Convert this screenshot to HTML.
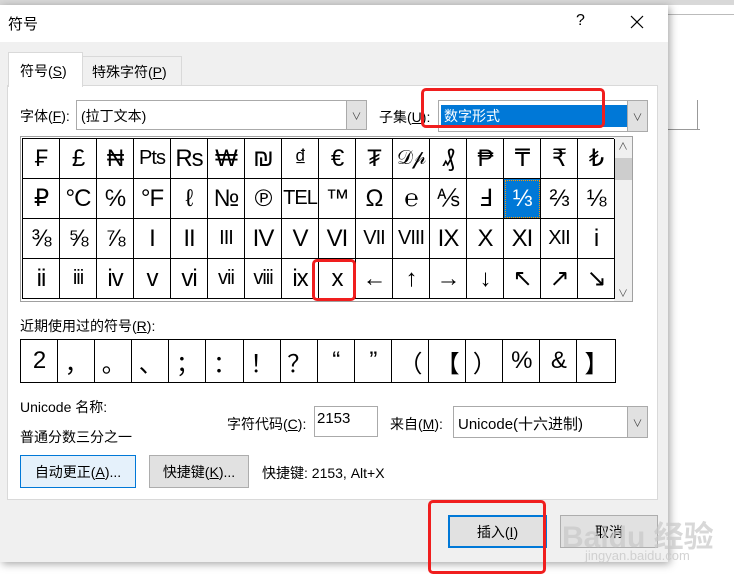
<!DOCTYPE html>
<html><head><meta charset="utf-8">
<style>
*{box-sizing:border-box;margin:0;padding:0}
body{width:734px;height:584px;background:#fff;position:relative;overflow:hidden;font-family:"Liberation Sans","Noto Sans CJK SC",sans-serif;font-size:14px;color:#000}
.abs{position:absolute}
.dlg{left:0;top:5px;width:668px;height:557px;background:#f0f0f0;box-shadow:2px 2px 8px rgba(0,0,0,.35)}
.cell{position:absolute;display:flex;align-items:center;justify-content:center;border-right:1px solid #000;border-bottom:1px solid #000;font-size:24px;background:#fff;font-family:"Liberation Sans","DejaVu Sans",sans-serif;font-weight:normal;white-space:nowrap;overflow:hidden;letter-spacing:-1px}
.combo{background:#fff;border:1px solid #aaa}
.arrow{position:absolute;right:0;top:0;bottom:0;width:20px;background:#e1e1e1;border-left:1px solid #aaa;display:flex;align-items:center;justify-content:center;font-size:10px;color:#444}
.btn{position:absolute;background:#e1e1e1;border:1px solid #adadad;display:flex;align-items:center;justify-content:center;font-size:14px}
.red{position:absolute;border:3px solid #f01e1e;border-radius:5px}
u{text-decoration:underline}
</style></head><body>
<div class="abs" style="left:0;top:0;width:734px;height:5px;background:#d8d8d8"></div>
<div class="abs" style="left:668px;top:14px;width:66px;height:1px;background:#bbb"></div>
<div class="abs" style="left:697px;top:100px;width:1px;height:30px;background:#999"></div>
<div class="abs" style="left:668px;top:129px;width:32px;height:1px;background:#999"></div>
<div class="abs dlg"></div>
<div class="abs" style="left:0;top:5px;width:668px;height:37px;background:#fff"></div>
<div class="abs" style="left:8px;top:13px;font-size:15px">符号</div>
<div class="abs" style="left:576px;top:12px;font-size:16px">?</div>
<svg class="abs" style="left:630px;top:15px" width="14" height="14"><path d="M1 1L13 13M13 1L1 13" stroke="#000" stroke-width="1.2"/></svg>
<div class="abs" style="left:7px;top:85px;width:651px;height:415px;background:#fff;border:1px solid #d9d9d9"></div>
<div class="abs" style="left:82px;top:56px;width:100px;height:30px;background:#f0f0f0;border:1px solid #d9d9d9"></div>
<div class="abs" style="left:92px;top:62px;font-size:14px">特殊字符(<u>P</u>)</div>
<div class="abs" style="left:8px;top:52px;width:75px;height:35px;background:#fff;border:1px solid #d9d9d9;border-bottom:none"></div>
<div class="abs" style="left:20px;top:61px;font-size:14px">符号(<u>S</u>)</div>
<div class="abs" style="left:20px;top:106px">字体(<u>F</u>):</div>
<div class="abs combo" style="left:76px;top:100px;width:291px;height:30px"><span style="position:absolute;left:4px;top:5px">(拉丁文本)</span><div class="arrow">∨</div></div>
<div class="abs" style="left:379px;top:107px">子集(<u>U</u>):</div>
<div class="abs combo" style="left:438px;top:100px;width:210px;height:32px"><div style="position:absolute;left:2px;top:4px;width:186px;height:22px;background:#0078d7;color:#fff;padding-left:3px;line-height:22px">数字形式</div><div class="arrow">∨</div></div>
<div class="red" style="left:421px;top:88px;width:184px;height:40px"></div>
<div class="abs" style="left:20px;top:136px;width:613px;height:166px;border:1px solid #a0a0a0;background:#fff"></div>
<div class="abs" style="left:22px;top:138px;width:1px;height:161px;background:#000"></div>
<div class="abs" style="left:22px;top:138px;width:592px;height:1px;background:#000"></div>
<div class="abs" style="left:614px;top:137px;width:18px;height:164px;background:#f0f0f0"></div>
<div class="abs" style="left:615px;top:158px;width:17px;height:22px;background:#cdcdcd"></div>
<div class="abs" style="left:618px;top:138px;font-size:10px;color:#555">∧</div>
<div class="abs" style="left:618px;top:285px;font-size:10px;color:#555">∨</div>
<div id="g"></div>
<div class="red" style="left:312px;top:259px;width:44px;height:42px"></div>
<div class="abs" style="left:20px;top:316px">近期使用过的符号(<u>R</u>):</div>
<div class="abs" style="left:20px;top:339px;width:596px;height:44px;border:1px solid #000;background:#fff"></div>
<div id="r"></div>
<div class="abs" style="left:20px;top:397px">Unicode 名称:</div>
<div class="abs" style="left:20px;top:427px">普通分数三分之一</div>
<div class="abs" style="left:227px;top:414px">字符代码(<u>C</u>):</div>
<div class="abs" style="left:314px;top:406px;width:64px;height:31px;background:#fff;border:1px solid #aaa;padding:3px 2px;font-size:15px">2153</div>
<div class="abs" style="left:390px;top:414px">来自(<u>M</u>):</div>
<div class="abs combo" style="left:453px;top:406px;width:195px;height:32px"><span style="position:absolute;left:4px;top:6px;font-size:15px">Unicode(十六进制)</span><div class="arrow">∨</div></div>
<div class="btn" style="left:20px;top:455px;width:116px;height:33px;background:#e5f1fb;border:1px solid #0078d7">自动更正(<u>A</u>)...</div>
<div class="btn" style="left:149px;top:455px;width:100px;height:33px">快捷键(<u>K</u>)...</div>
<div class="abs" style="left:262px;top:463px">快捷键: 2153, Alt+X</div>
<div class="btn" style="left:448px;top:515px;width:99px;height:33px;border:2px solid #0078d7">插入(<u>I</u>)</div>
<div class="btn" style="left:560px;top:515px;width:98px;height:33px">取消</div>
<div class="red" style="left:428px;top:500px;width:118px;height:74px"></div>
<div class="abs" style="left:562px;top:512px;font-size:30px;color:rgba(200,200,200,.7);font-weight:bold;white-space:nowrap">Baidu 经验</div>
<div class="abs" style="left:585px;top:548px;font-size:13px;color:rgba(200,200,200,.8);white-space:nowrap">jingyan.baidu.com</div>
<script>
var rows=[["₣","£","₦","Pts","Rs","₩","₪","₫","€","₮","𝒟𝓅","₰","₱","₸","₹","₺"],
["₽","°C","℅","°F","ℓ","№","℗","TEL","™","Ω","℮","⅍","Ⅎ","⅓","⅔","⅛"],
["⅜","⅝","⅞","I","II","III","IV","V","VI","VII","VIII","IX","X","XI","XII","i"],
["ii","iii","iv","v","vi","vii","viii","ix","x","←","↑","→","↓","↖","↗","↘"]];
var h="",w=592/16;
for(var r=0;r<4;r++)for(var c=0;c<16;c++){var x=23+c*w,y=139+r*40;var sel=(r==1&&c==13);var t=rows[r][c];var fs=(t.length>=3?20:24);
h+='<div class="cell" style="left:'+x+'px;top:'+y+'px;width:'+w+'px;height:40px;font-size:'+fs+'px;'+(sel?'background:#0078d7;color:#fff;outline:1px dotted #f90;outline-offset:-2px;':'')+'">'+t+'</div>';}
document.getElementById("g").innerHTML=h;
var rc=["2","，","。","、","；","：","！","？","“","”","（","【","）","%","&","】"];h="";
for(var c=0;c<16;c++){var x=21+c*37.1;h+='<div class="cell" style="left:'+x+'px;top:340px;width:37px;height:42px;border-bottom:none;'+(c==15?'border-right:none;':'')+'">'+rc[c]+'</div>';}
document.getElementById("r").innerHTML=h;
</script>
</body></html>
